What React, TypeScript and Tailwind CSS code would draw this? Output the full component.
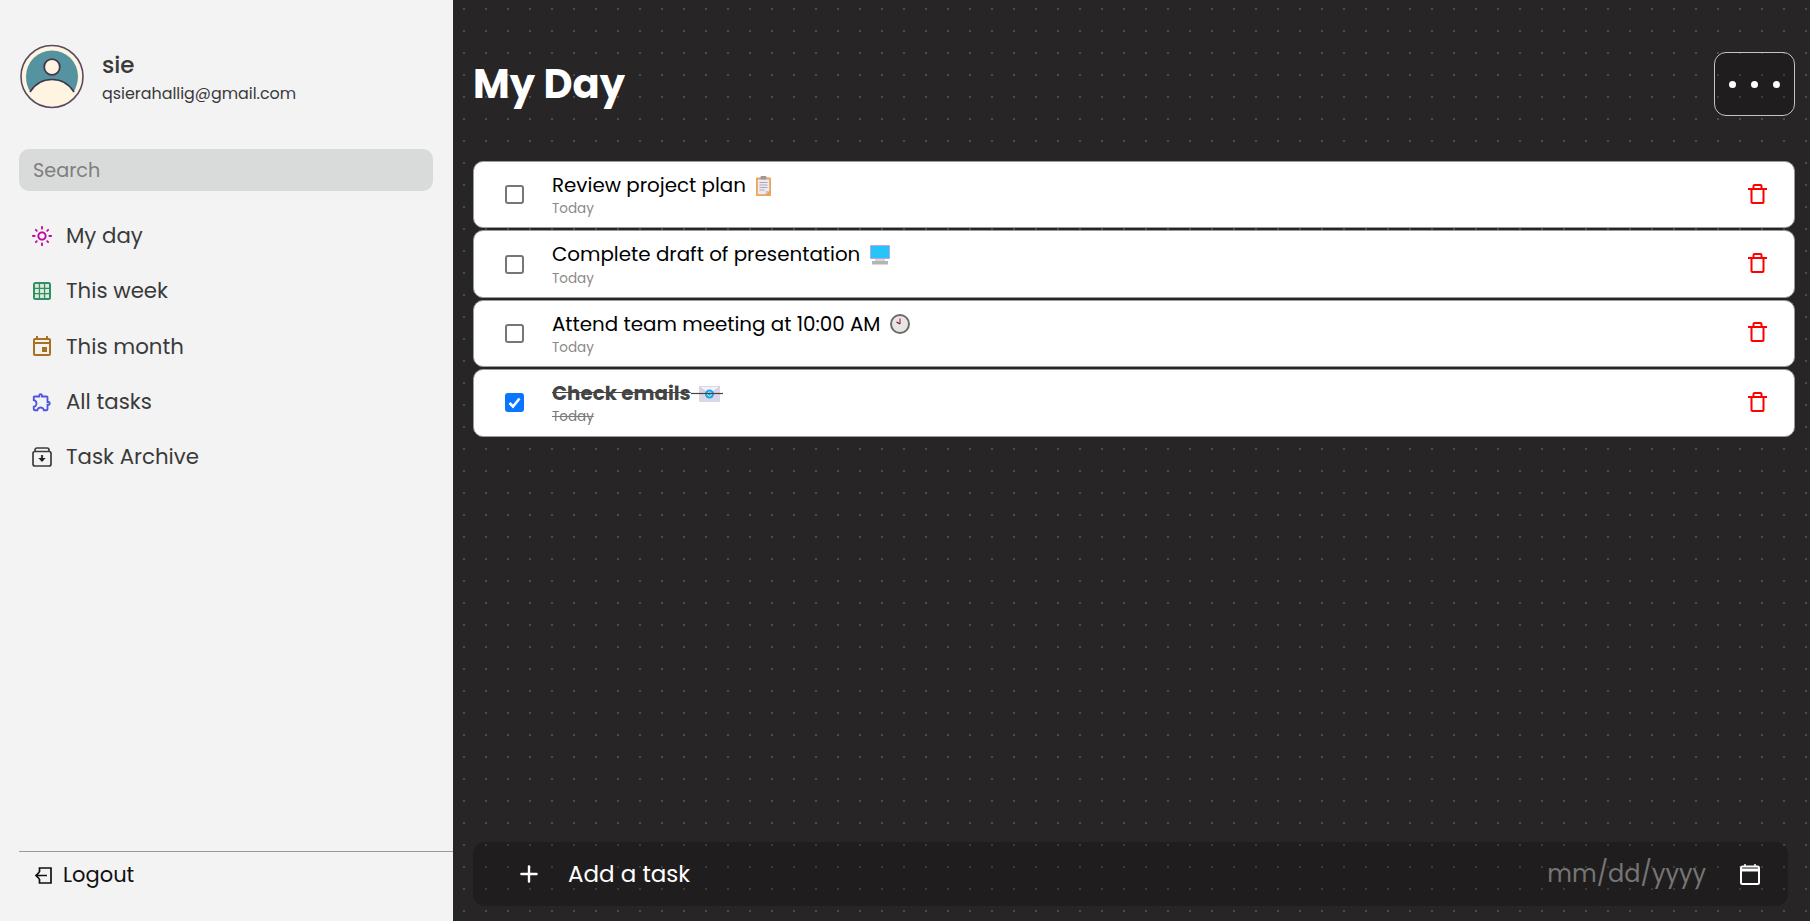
import type { ReactNode } from "react";
import { Plus } from "lucide-react";
import { MdOutlineExtension, MdOutlineEvent, MdOutlineLightMode } from "react-icons/md";

const SANS = "font-['Poppins','Inter',sans-serif]";

function WeekIcon() {
  return (
    <svg width="18" height="18" viewBox="0 0 18 18">
      <rect x="0" y="0" width="18" height="18" rx="2.500" fill="#2f8f68" />
      <path d="M2 2h3.800v3.800H2zM7.100 2h3.800v3.800H7.100zM12.200 2H16v3.800h-3.800zM2 7.100h3.800v3.800H2zM7.100 7.100h3.800v3.800H7.100zM12.200 7.100H16v3.800h-3.800zM2 12.200h3.800V16H2zM7.100 12.200h3.800V16H7.100zM12.200 12.200H16V16h-3.800z" fill="#dfe9d8" />
    </svg>
  );
}

function ArchiveIcon() {
  return (
    <svg width="20" height="20" viewBox="0 0 20 20" fill="none" stroke="#3c3c3c" strokeWidth="1.700" className="-ml-[1px]">
      <path d="M3 5V3a2 2 0 0 1 2-2h10a2 2 0 0 1 2 2v2" />
      <rect x="1" y="4.500" width="18" height="14.500" rx="2" />
      <path d="M10 8v4" strokeWidth="2.200" />
      <path d="M6.300 11h7.400L10 15z" fill="#222" stroke="none" />
    </svg>
  );
}

function LogoutIcon() {
  return (
    <svg width="17" height="17" viewBox="0 0 17 17" fill="none" stroke="#111" strokeWidth="1.700">
      <path d="M4.500 5V1h11.500v15H4.500v-4" />
      <path d="M12 8.500H1.500M4.500 5 1 8.500 4.500 12" />
    </svg>
  );
}

function TrashIcon() {
  return (
    <svg width="19" height="20" viewBox="0 0 19 20" fill="none" stroke="#ff0000" strokeWidth="2">
      <path d="M0 5h19" />
      <path d="M5.500 5V2a1 1 0 0 1 1-1h6a1 1 0 0 1 1 1v3" />
      <path d="M3.500 5v13a1 1 0 0 0 1 1h10a1 1 0 0 0 1-1V5" />
    </svg>
  );
}

function CalendarIcon() {
  return (
    <svg width="20" height="21" viewBox="0 0 20 21" fill="none" stroke="#fff">
      <path d="M5 0v3M15 0v3" strokeWidth="1.500" />
      <rect x="1" y="2.500" width="18" height="17.500" rx="1.500" strokeWidth="2" />
      <path d="M1 6h18" strokeWidth="3" />
    </svg>
  );
}

function ClipboardEmoji() {
  return (
    <svg width="15" height="20" viewBox="0 0 15 20">
      <rect x="0" y="1.500" width="15" height="18.500" rx="1" fill="#e9a35b" />
      <path d="M1.800 3.500h11.400v11.500l-3.500 3.200H1.800z" fill="#efeaf2" />
      <path d="M9.700 18.200l3.500-3.200H9.700z" fill="#c9c4cf" />
      <rect x="4.500" y="0" width="6" height="3.500" rx="1" fill="#9a97a0" />
      <path d="M3.500 6.500h8M3.500 9h8M3.500 11.500h8M3.500 14h5" stroke="#a5a2ab" strokeWidth="0.900" />
    </svg>
  );
}

function DesktopEmoji() {
  return (
    <svg width="20" height="20" viewBox="0 0 20 20">
      <rect x="0" y="0" width="20" height="14" rx="1" fill="#b7a9e0" />
      <rect x="1" y="1" width="18" height="12" fill="#25c4fb" />
      <rect x="5" y="14" width="10" height="2" fill="#d7d7dc" />
      <rect x="2" y="16" width="16" height="3.500" fill="#b3b3b8" />
    </svg>
  );
}

function ClockEmoji() {
  return (
    <svg width="20" height="20" viewBox="0 0 20 20" fill="none">
      <circle cx="10" cy="10" r="9" fill="#e8e6e4" stroke="#6b6b6b" strokeWidth="2" />
      <path d="M10 10V4.500" stroke="#e0245e" strokeWidth="1.300" />
      <path d="M10 10 6.500 8" stroke="#333" strokeWidth="1.300" />
    </svg>
  );
}

// the strike-through runs across the gap and the emoji, as it does on the text
function EnvelopeEmoji() {
  return (
    <svg width="32" height="16" viewBox="0 0 32 16">
      <rect x="8" y="0" width="21" height="16" rx="1" fill="#dcd6e6" />
      <path d="M8.500 1 18.500 9 28.500 1" fill="#f4f0f8" stroke="#bdb6cc" strokeWidth="0.800" />
      <circle cx="18.500" cy="8" r="4.500" fill="#1ea7e8" />
      <circle cx="18.500" cy="8" r="2" fill="none" stroke="#d8f2ff" strokeWidth="0.900" />
      <path d="M0 7.500h32" stroke="#444" strokeWidth="1.200" />
    </svg>
  );
}

const NAV = [
  { label: "My day", icon: <MdOutlineLightMode size={22} color="#c0089e" className="-ml-[2px]" /> },
  { label: "This week", icon: <WeekIcon /> },
  { label: "This month", icon: <MdOutlineEvent size={24} color="#a8701f" className="-ml-[3px]" /> },
  { label: "All tasks", icon: <MdOutlineExtension size={22} color="#4f55e0" className="-ml-[2px]" /> },
  { label: "Task Archive", icon: <ArchiveIcon /> },
];

const TASKS = [
  { title: "Review project plan", emoji: <ClipboardEmoji />, done: false },
  { title: "Complete draft of presentation", emoji: <DesktopEmoji />, done: false },
  { title: "Attend team meeting at 10:00 AM", emoji: <ClockEmoji />, done: false },
  { title: "Check emails", emoji: <EnvelopeEmoji />, done: true },
];

function TaskRow({ title, emoji, done }: { title: string; emoji: ReactNode; done: boolean }) {
  return (
    <div className="flex h-[67.4px] items-center rounded-[10px] border border-[#9a9a9a] bg-white pl-[31px] pr-[27px]">
      <span
        className={
          done
            ? "flex h-[19px] w-[19px] items-center justify-center rounded-[3px] bg-[#0a75ff]"
            : "h-[19px] w-[19px] rounded-[3px] border-2 border-[#767676]"
        }
      >
        {done && (
          <svg width="15" height="15" viewBox="0 0 15 15" fill="none" stroke="#fff" strokeWidth="2.600">
            <path d="M2.500 8 6 11.500 12.500 3.500" />
          </svg>
        )}
      </span>
      <div className="ml-[28px] flex flex-1 flex-col pt-[2px]">
        <div
          className={
            done
              ? "flex h-[27px] items-center text-[19.850px] font-bold text-[#444]"
              : "flex h-[27px] items-center gap-[10px] text-[19.850px] text-black"
          }
        >
          <span className={done ? "line-through" : ""}>{title}</span>
          {emoji}
        </div>
        <div className={done ? "text-[13.500px] leading-[20px] text-[#7a7a7a] line-through" : "text-[13.500px] leading-[20px] text-[#8a8a8a]"}>
          Today
        </div>
      </div>
      <div className="-mt-[2px]">
        <TrashIcon />
      </div>
    </div>
  );
}

export default function App() {
  return (
    <div className={`flex h-[921px] w-[1810px] overflow-hidden ${SANS}`}>
      <aside className="flex w-[453px] shrink-0 flex-col bg-[#f3f3f3] text-[#3a3a3a]">
        <div className="flex items-center gap-[18px] pl-[20px] pt-[44px]">
          <svg width="64" height="65" viewBox="0 0 64 65">
            <circle cx="32" cy="32.500" r="31" fill="#fff4e2" stroke="#5a4a60" strokeWidth="1.600" />
            <path d="M6 32.500a26 26 0 0 1 52 0c0 6-2 11-4 15L32 60 10 47.500c-2.500-4-4-9-4-15z" fill="#54939f" />
            <path d="M10 48C15 40 23 35.500 32 35.500S49 40 54 48C49 56 41 61 32 61S15 56 10 48z" fill="#fff4e2" />
            <path d="M10 48C15 40 23 35.500 32 35.500S49 40 54 48" fill="none" stroke="#41384c" strokeWidth="1.600" />
            <circle cx="32" cy="23" r="7.800" fill="#fff4e2" stroke="#41384c" strokeWidth="1.800" />
          </svg>
          <div className="pt-[3px]">
            <div className="text-[23px] leading-[32px] font-medium">sie</div>
            <div className="text-[15.900px] leading-[26px]">qsierahallig@gmail.com</div>
          </div>
        </div>
        <div className="ml-[19px] mt-[40px] flex h-[42px] w-[414px] items-center rounded-[10px] bg-[#d9dbdb] pl-[14px] pt-[2px] text-[19.200px] text-[#7e7e7e]">
          Search
        </div>
        <nav className="mt-[17px] flex flex-col pl-[33px]">
          {NAV.map((item) => (
            <div key={item.label} className="flex h-[55.400px] items-center">
              <span className="flex w-[33px] items-center">{item.icon}</span>
              <span className="text-[21.300px]">{item.label}</span>
            </div>
          ))}
        </nav>
        <div className="mb-[23px] ml-[19px] mt-auto flex h-[47px] items-center gap-[11px] border-t border-[#9a9a9a] pl-[16px] text-[21px] text-[#111]">
          <LogoutIcon />
          <span>Logout</span>
        </div>
      </aside>
      <main className="flex min-w-0 flex-1 flex-col bg-[#272526] bg-[radial-gradient(#4c4c4c_1px,transparent_1.500px)] bg-[length:22px_22px] bg-[position:0_-2px] pl-[20px] pr-[15px]">
        <header className="flex h-[161px] items-start justify-between">
          <h1 className="mt-[54px] text-[40px] leading-[60px] font-bold text-white">My Day</h1>
          <button className="mt-[52px] flex h-[64px] w-[81px] items-center justify-center gap-[15px] rounded-[12px] border border-[#c4c4c4] bg-black/20">
            <span className="h-[7px] w-[7px] rounded-full bg-white" />
            <span className="h-[7px] w-[7px] rounded-full bg-white" />
            <span className="h-[7px] w-[7px] rounded-full bg-white" />
          </button>
        </header>
        <div className="flex flex-col gap-[2px]">
          {TASKS.map((task) => (
            <TaskRow key={task.title} {...task} />
          ))}
        </div>
        <div className="mb-[15px] mr-[7px] mt-auto flex h-[64px] items-center rounded-[12px] bg-black/20 pl-[43px] pr-[28px] text-[23px] text-white">
          <Plus size={26} strokeWidth={2.200} />
          <span className="ml-[26px]">Add a task</span>
          <span className="ml-auto text-[24px] text-[#757575]">mm/dd/yyyy</span>
          <div className="ml-[34px]">
            <CalendarIcon />
          </div>
        </div>
      </main>
    </div>
  );
}
